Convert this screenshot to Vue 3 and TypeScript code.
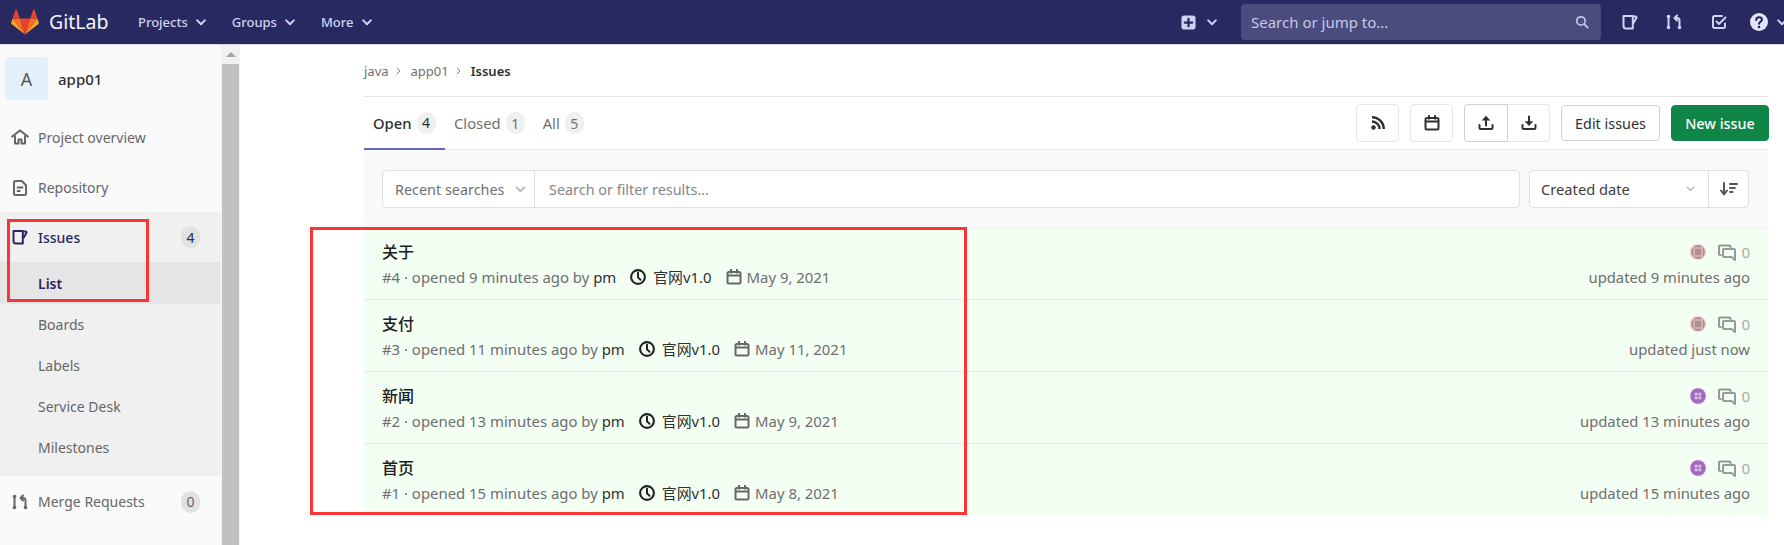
<script setup lang="ts">
interface Issue { title: string; num: number; opened: string; date: string; updated: string; av: string }
const issues: Issue[] = [
  { title: '关于', num: 4, opened: '9 minutes ago', date: 'May 9, 2021', updated: 'updated 9 minutes ago', av: 'brown' },
  { title: '支付', num: 3, opened: '11 minutes ago', date: 'May 11, 2021', updated: 'updated just now', av: 'brown' },
  { title: '新闻', num: 2, opened: '13 minutes ago', date: 'May 9, 2021', updated: 'updated 13 minutes ago', av: 'purple' },
  { title: '首页', num: 1, opened: '15 minutes ago', date: 'May 8, 2021', updated: 'updated 15 minutes ago', av: 'purple' },
]
const subItems = ['Boards', 'Labels', 'Service Desk', 'Milestones']
const navLinks = ['Projects', 'Groups', 'More']
</script>

<template>
  <div class="page">
    <header class="topbar">
      <div class="brand">
        <svg class="logo" viewBox="0 0 28 26" width="28" height="26">
          <path d="M14 25.5 19.2 9.6H8.8z" fill="#e24329" />
          <path d="M14 25.5 8.8 9.6H1.5z" fill="#fc6d26" />
          <path d="M1.5 9.6.1 14c-.1.4 0 .8.4 1.1L14 25.5z" fill="#fca326" />
          <path d="M1.5 9.6h7.3L5.6.4c-.2-.5-.8-.5-1 0z" fill="#e24329" />
          <path d="M14 25.5 19.2 9.6h7.3z" fill="#fc6d26" />
          <path d="M26.5 9.6 27.9 14c.1.4 0 .8-.4 1.1L14 25.5z" fill="#fca326" />
          <path d="M26.5 9.6h-7.3L22.4.4c.2-.5.8-.5 1 0z" fill="#e24329" />
        </svg>
        <span class="brand-name">GitLab</span>
      </div>
      <nav class="top-nav">
        <span v-for="l in navLinks" :key="l" class="top-link">
          {{ l }}
          <svg class="chev" viewBox="0 0 10 7" width="10" height="7"><path d="M1.2 1.4 5 5.2l3.8-3.8" fill="none" stroke="currentColor" stroke-width="2" stroke-linecap="round" stroke-linejoin="round" /></svg>
        </span>
      </nav>
      <div class="top-right">
        <svg class="plus" viewBox="0 0 16 16" width="15" height="15"><rect x="0.5" y="0.5" width="15" height="15" rx="3" fill="#d1d1f0" /><path d="M8 4v8M4 8h8" stroke="#292961" stroke-width="2.4" stroke-linecap="round" /></svg>
        <svg class="chev plus-chev" viewBox="0 0 10 7" width="10" height="7"><path d="M1.2 1.4 5 5.2l3.8-3.8" fill="none" stroke="currentColor" stroke-width="2" stroke-linecap="round" stroke-linejoin="round" /></svg>
        <div class="top-search">
          <span>Search or jump to...</span>
          <svg viewBox="0 0 16 16" width="14" height="14"><circle cx="6.8" cy="6.8" r="4.8" fill="none" stroke="#c4c4e4" stroke-width="2" /><path d="m10.5 10.5 4 4" stroke="#c4c4e4" stroke-width="2.2" stroke-linecap="round" /></svg>
        </div>
        <svg class="t-issues" viewBox="0 0 16 16" width="16" height="16"><path d="M1.5 2h9.3v12.5H4A2.5 2.5 0 0 1 1.5 12zM10.8 2.5h2.7c.9 0 1.3.8.9 1.5l-3.6 6" fill="none" stroke="#d1d1f0" stroke-width="2" stroke-linejoin="round" stroke-linecap="round" /></svg>
        <svg class="t-mr" viewBox="0 0 16 16" width="16" height="16"><g fill="none" stroke="#d1d1f0" stroke-width="2" stroke-linecap="round" stroke-linejoin="round"><path d="M2.5 3.5v9M13.5 12.500V6.500c0-1.400-.8-2.500-2.300-2.500H9M11 1.500 8.500 4 11 6.500" /></g><circle cx="2.5" cy="2.5" r="1.8" fill="#d1d1f0" /><circle cx="2.5" cy="13.5" r="1.8" fill="#d1d1f0" /><circle cx="13.5" cy="13.5" r="1.8" fill="#d1d1f0" /></svg>
        <svg class="t-todo" viewBox="0 0 16 16" width="16" height="16"><path d="M14 9.5v3c0 .8-.7 1.500-1.500 1.500h-9C2.700 14 2 13.300 2 12.500v-9C2 2.700 2.700 2 3.500 2H11M5.500 7.500 8 10l6.500-6.500" fill="none" stroke="#d1d1f0" stroke-width="2" stroke-linecap="round" stroke-linejoin="round" /></svg>
        <svg class="t-help" viewBox="0 0 18 18" width="18" height="18"><circle cx="9" cy="9" r="9" fill="#e4e4f6" /><path d="M6.2 7c0-1.700 1.200-2.700 2.900-2.700s2.800 1 2.800 2.400c0 2.200-2.900 2-2.900 4" fill="none" stroke="#292961" stroke-width="2.100" stroke-linecap="round" /><circle cx="9" cy="14" r="1.300" fill="#292961" /></svg>
        <svg class="chev help-chev" viewBox="0 0 10 7" width="10" height="7"><path d="M1.2 1.4 5 5.2l3.8-3.8" fill="none" stroke="currentColor" stroke-width="2" stroke-linecap="round" stroke-linejoin="round" /></svg>
      </div>
    </header>

    <div class="body">
      <aside class="sidebar">
        <div class="side-inner">
          <div class="proj">
            <div class="proj-avatar">A</div>
            <span class="proj-name">app01</span>
          </div>
          <div class="side-item first">
            <svg viewBox="0 0 18 16" width="18" height="16"><path d="M1.200 7.500 9 1.500l7.800 6" fill="none" stroke="#666" stroke-width="2.200" stroke-linejoin="round" stroke-linecap="round" /><path d="M4 6.500v8h3.500v-4h3v4H14v-8" fill="none" stroke="#666" stroke-width="2" stroke-linejoin="round" /></svg>
            <span>Project overview</span>
          </div>
          <div class="side-item">
            <svg class="repo" viewBox="0 0 14 16" width="14" height="16"><path d="M2.500 1h6.300L13 5.200v8.300a1.500 1.500 0 0 1-1.500 1.500h-9A1.500 1.500 0 0 1 1 13.500v-11A1.500 1.500 0 0 1 2.500 1z" fill="none" stroke="#666" stroke-width="2" stroke-linejoin="round" /><path d="M3.800 7.500h6.400M3.800 11h3.600" stroke="#666" stroke-width="2" /></svg>
            <span>Repository</span>
          </div>
          <div class="side-group">
            <div class="side-item active">
              <svg viewBox="0 0 16 16" width="16" height="16"><path d="M1.500 2h9.300v12.500H4A2.500 2.500 0 0 1 1.500 12zM10.800 2.500h2.700c.9 0 1.300.8.900 1.500l-3.600 6" fill="none" stroke="#292961" stroke-width="2" stroke-linejoin="round" stroke-linecap="round" /></svg>
              <span>Issues</span>
              <em class="count">4</em>
            </div>
            <div class="sub-item current">List</div>
            <div v-for="s in subItems" :key="s" class="sub-item">{{ s }}</div>
          </div>
          <div class="side-item mr">
            <svg viewBox="0 0 16 16" width="16" height="16"><g fill="none" stroke="#666" stroke-width="2" stroke-linecap="round" stroke-linejoin="round"><path d="M2.500 3.500v9M13.500 12.500V6.500c0-1.400-.8-2.500-2.300-2.500H9M11 1.500 8.500 4 11 6.500" /></g><circle cx="2.500" cy="2.500" r="1.800" fill="#666" /><circle cx="2.500" cy="13.500" r="1.800" fill="#666" /><circle cx="13.500" cy="13.500" r="1.800" fill="#666" /></svg>
            <span>Merge Requests</span>
            <em class="count">0</em>
          </div>
        </div>
        <div class="scrollbar">
          <div class="arrow"></div>
          <div class="thumb"></div>
        </div>
      </aside>

      <main class="main">
        <div class="crumbs">
          <span>java</span>
          <svg viewBox="0 0 6 10" width="5" height="8"><path d="m1 1.200 3.800 3.800L1 8.800" fill="none" stroke="#777" stroke-width="1.200" /></svg>
          <span>app01</span>
          <svg viewBox="0 0 6 10" width="5" height="8"><path d="m1 1.200 3.800 3.800L1 8.800" fill="none" stroke="#777" stroke-width="1.200" /></svg>
          <strong>Issues</strong>
        </div>

        <div class="tabs">
          <div class="tab-list">
            <div class="tab on">Open <b class="badge">4</b></div>
            <div class="tab">Closed <b class="badge">1</b></div>
            <div class="tab">All <b class="badge">5</b></div>
          </div>
          <div class="actions">
            <button class="btn icon">
              <svg viewBox="0 0 16 16" width="16" height="16"><circle cx="3.500" cy="12.500" r="2.200" fill="#303030" /><path d="M2 6.500a7.500 7.500 0 0 1 7.500 7.500M2 2.200A11.800 11.800 0 0 1 13.800 14" fill="none" stroke="#303030" stroke-width="2.400" /></svg>
            </button>
            <button class="btn icon">
              <svg viewBox="0 0 16 16" width="16" height="16"><rect x="1.500" y="3" width="13" height="11.500" rx="1.500" fill="none" stroke="#303030" stroke-width="2" /><path d="M2 6.500h12" stroke="#303030" stroke-width="2" /><path d="M5 .8v3M11 .8v3" stroke="#303030" stroke-width="2" stroke-linecap="round" /></svg>
            </button>
            <div class="btn-group">
              <button class="btn icon first-g">
                <svg viewBox="0 0 16 16" width="16" height="16"><path d="M1.500 10v2.500c0 .8.700 1.500 1.500 1.500h10c.8 0 1.500-.7 1.500-1.500V10M8 10.500V4" fill="none" stroke="#303030" stroke-width="2" stroke-linecap="round" stroke-linejoin="round" /><path d="M8 .8 12.300 5.500H3.700z" fill="#303030" /></svg>
              </button>
              <button class="btn icon last-g">
                <svg viewBox="0 0 16 16" width="16" height="16"><path d="M1.500 10v2.500c0 .8.700 1.500 1.500 1.500h10c.8 0 1.500-.7 1.500-1.500V10M8 1.500V7" fill="none" stroke="#303030" stroke-width="2" stroke-linecap="round" stroke-linejoin="round" /><path d="M8 11 12.300 6.300H3.700z" fill="#303030" /></svg>
              </button>
            </div>
            <button class="btn text">Edit issues</button>
            <button class="btn new">New issue</button>
          </div>
        </div>

        <div class="filter">
          <div class="search-box">
            <div class="recent">
              Recent searches
              <svg viewBox="0 0 10 7" width="11" height="7"><path d="M1.200 1.400 5 5.200l3.800-3.800" fill="none" stroke="#bbb" stroke-width="2" stroke-linecap="round" stroke-linejoin="round" /></svg>
            </div>
            <div class="placeholder">Search or filter results...</div>
          </div>
          <div class="sort">
            <div class="sort-label">
              Created date
              <svg viewBox="0 0 10 7" width="9" height="6"><path d="M1.200 1.400 5 5.200l3.800-3.800" fill="none" stroke="#bbb" stroke-width="1.800" stroke-linecap="round" stroke-linejoin="round" /></svg>
            </div>
            <div class="sort-dir">
              <svg viewBox="0 0 18 16" width="18" height="16"><path d="M4 2v10.500M1 9.500l3 4 3-4" fill="none" stroke="#555" stroke-width="2" stroke-linecap="round" stroke-linejoin="round" /><path d="M10 3h7M10 7h5M10 11h2.500" stroke="#555" stroke-width="1.800" stroke-linecap="round" /></svg>
            </div>
          </div>
        </div>

        <ul class="issue-list">
          <li v-for="i in issues" :key="i.num" class="issue">
            <div class="issue-left">
              <div class="issue-title">{{ i.title }}</div>
              <div class="issue-meta">
                <span>#{{ i.num }} · opened {{ i.opened }} by <span class="dark">pm</span></span>
                <span class="meta-item milestone dark">
                  <svg viewBox="0 0 16 16" width="16" height="16"><circle cx="8" cy="8" r="6.900" fill="none" stroke="#222" stroke-width="2.100" /><path d="M8 3.800v4.600l2.500 2.300" fill="none" stroke="#222" stroke-width="2" stroke-linecap="round" /></svg>
                  官网v1.0
                </span>
                <span class="meta-item">
                  <svg viewBox="0 0 16 16" width="16" height="16"><rect x="1.500" y="3" width="13" height="11.500" rx="1.500" fill="none" stroke="#666" stroke-width="2" /><path d="M2 6.500h12" stroke="#666" stroke-width="2" /><path d="M5 .8v3M11 .8v3" stroke="#666" stroke-width="2" stroke-linecap="round" /></svg>
                  {{ i.date }}
                </span>
              </div>
            </div>
            <div class="issue-right">
              <div class="issue-stats">
                <svg class="avatar" viewBox="0 0 18 18" width="18" height="18">
                  <template v-if="i.av === 'brown'">
                    <circle cx="9" cy="9" r="8.500" fill="#eadede" />
                    <circle cx="9" cy="9" r="7" fill="#8a4f50" />
                    <path d="M5 2v14M7 1v16M9 1v16M11 1v16M13 2v14M2 5h14M1 7h16M1 9h16M1 11h16M2 13h14" stroke="#f1e7e7" stroke-width="0.800" fill="none" />
                    <rect x="6" y="6" width="6" height="6" fill="#7d4042" opacity="0.300" />
                  </template>
                  <template v-else>
                    <circle cx="9" cy="9" r="8.700" fill="#ece4f0" />
                    <circle cx="9" cy="9" r="7.700" fill="#a468bf" />
                    <path d="M7 5.500v7M11 5.500v7M5.500 7h7M5.500 11h7" stroke="#d9bce6" stroke-width="1.500" />
                  </template>
                </svg>
                <svg class="comment" viewBox="0 0 18 18" width="18" height="18"><path d="M12.500 4V2.500a1 1 0 0 0-1-1H2a1 1 0 0 0-1 1V10a1 1 0 0 0 1 1h1.500" fill="none" stroke="#949a94" stroke-width="2" /><path d="M6 5h10a1 1 0 0 1 1 1v10l-3.500-3H6a1 1 0 0 1-1-1V6a1 1 0 0 1 1-1z" fill="none" stroke="#949a94" stroke-width="2" stroke-linejoin="round" /></svg>
                <span class="zero">0</span>
              </div>
              <div class="updated">{{ i.updated }}</div>
            </div>
          </li>
        </ul>
      </main>
    </div>

    <div class="red-box red-side"></div>
    <div class="red-box red-list"></div>
  </div>
</template>

<style>
html, body { margin: 0; background: #fff; overflow: hidden; }
</style>

<style scoped>
* { box-sizing: border-box; }
.page {
  position: relative;
  width: 1784px;
  height: 545px;
  overflow: hidden;
  font-family: "Noto Sans", "Noto Sans CJK SC", sans-serif;
  font-size: 14px;
  color: #303030;
}
.topbar {
  height: 45px;
  background: #292961;
  border-bottom: 1px solid #d8d8e4;
  display: flex;
  align-items: center;
  padding-left: 11px;
  color: #d1d1f0;
}
.brand { display: flex; align-items: center; gap: 10px; }
.logo { display: block; }
.brand-name { font-size: 19.5px; color: #f4f4f8; line-height: 1; width: 59px; }
.top-nav { display: flex; margin-left: 30px; gap: 26px; }
.top-link { display: flex; align-items: center; gap: 8px; font-size: 13px; font-weight: 500; color: #d1d1f0; }
.chev { display: block; color: #d1d1f0; }
.top-right { margin-left: auto; display: flex; align-items: center; }
.plus { margin-right: 11px; }
.plus-chev { margin-right: 24px; }
.top-search {
  width: 360px;
  height: 36px;
  background: #4b4b7d;
  border-radius: 4px;
  display: flex;
  align-items: center;
  justify-content: space-between;
  padding: 0 12px 0 10px;
  color: #c8c8e6;
  font-size: 15px;
  margin-right: 21px;
}
.t-issues { margin-right: 28px; }
.t-mr { margin-right: 29px; }
.t-todo { margin-right: 23px; }
.help-chev { margin-left: 9px; margin-right: -3px; }

.body { display: flex; height: 500px; }
.sidebar { width: 240px; flex: none; display: flex; background: #fafafa; }
.side-inner { width: 221px; flex: none; display: flex; flex-direction: column; }
.proj { display: flex; align-items: center; padding: 12px 0 0 5px; gap: 10px; }
.proj-avatar {
  width: 43px;
  height: 43px;
  border-radius: 4px;
  background: #e3f1fc;
  color: #555;
  font-size: 18px;
  display: flex;
  align-items: center;
  justify-content: center;
}
.proj-name { font-size: 15px; font-weight: 500; color: #303030; }
.side-item {
  height: 49px;
  display: flex;
  align-items: center;
  padding: 0 21px 0 11px;
  color: #666;
  flex: none;
}
.side-item svg { flex: none; width: 18px; margin-right: 9px; }
.side-item.first { margin-top: 12px; height: 51px; padding-bottom: 1px; }
.side-group { background: #f0f0f0; padding-bottom: 8px; }
.side-item.active { color: #292961; font-weight: 500; height: 50px; }
.side-item.mr { margin-top: 1px; }
.count {
  margin-left: auto;
  font-style: normal;
  font-weight: 400;
  min-width: 19px;
  height: 22px;
  border-radius: 10px;
  background: #e2e2e2;
  color: inherit;
  font-size: 14px;
  display: flex;
  align-items: center;
  justify-content: center;
}
.sub-item { height: 41px; padding-left: 38px; display: flex; align-items: center; color: #666; }
.sub-item.current { height: 42px; background: #e5e5e5; color: #292961; font-weight: 600; margin-right: 1px; }
.scrollbar { flex: 1; background: #f1f1f1; padding: 0 1px; }
.arrow {
  width: 0; height: 0; margin: 7px auto 7px;
  border-left: 5px solid transparent; border-right: 5px solid transparent; border-bottom: 5px solid #a3a3a3;
}
.thumb { height: 500px; background: #c1c1c1; }

.main { width: 1404px; margin-left: 124px; flex: none; }
.crumbs {
  height: 52px;
  border-bottom: 1px solid #e5e5e5;
  display: flex;
  align-items: center;
  font-size: 13px;
  color: #707070;
}
.crumbs strong { font-weight: 600; color: #303030; }
.crumbs svg { margin: 0 10px -1px 7px; }
.tabs {
  height: 53px;
  display: flex;
  justify-content: space-between;
  border-bottom: 1px solid #e5e5e5;
}
.tab-list { display: flex; }
.tab {
  padding: 0 9px 1px;
  height: 53px;
  display: flex;
  align-items: center;
  gap: 5px;
  color: #707070;
  font-size: 14.8px;
}
.tab:first-child { width: 81px; }
.tab.on { color: #303030; font-weight: 500; border-bottom: 2px solid #6666c4; padding-bottom: 0; }
.badge {
  font-weight: 400;
  min-width: 19px;
  height: 22px;
  border-radius: 11px;
  background: #f0f0f0;
  font-size: 14px;
  display: flex;
  align-items: center;
  justify-content: center;
}
.actions { display: flex; align-items: center; gap: 11px; margin-right: -1px; }
.btn {
  font-family: inherit;
  font-size: 14.4px;
  height: 36px;
  border-radius: 4px;
  border: 1px solid #dfdfdf;
  background: #fff;
  color: #303030;
  display: flex;
  align-items: center;
  justify-content: center;
  padding: 0;
}
.btn.icon { width: 43px; height: 38px; border-color: #e6e6e6; }
.btn-group { display: flex; }
.btn.first-g { border-radius: 4px 0 0 4px; width: 44px; border-color: #cfcfcf; }
.btn.last-g { border-radius: 0 4px 4px 0; border-left: none; width: 42px; }
.btn.text { width: 99px; border-color: #d0d0d0; }
.btn.new { width: 98px; background: #108548; border-color: #108548; color: #fff; font-weight: 500; }

.filter {
  height: 78px;
  background: #fafafa;
  border-bottom: 1px solid #f0f0f0;
  padding: 20px 19px 0 18px;
  display: flex;
  gap: 9px;
}
.search-box, .sort {
  height: 38px;
  background: #fff;
  border: 1px solid #e0e0e0;
  border-radius: 4px;
  display: flex;
  align-items: center;
  color: #707070;
  font-size: 14.4px;
}
.search-box { width: 1138px; }
.recent {
  width: 152px;
  height: 100%;
  border-right: 1px solid #e0e0e0;
  display: flex;
  align-items: center;
  justify-content: space-between;
  padding: 0 8px 0 12px;
  flex: none;
}
.placeholder { padding-left: 14px; color: #868686; }
.sort { width: 220px; font-size: 14.7px; }
.sort-label {
  width: 179px;
  height: 100%;
  border-right: 1px solid #e0e0e0;
  display: flex;
  align-items: center;
  justify-content: space-between;
  padding: 0 13px 0 11px;
  color: #404040;
}
.sort-dir { flex: 1; display: flex; align-items: center; justify-content: center; }

.issue-list { list-style: none; margin: 0; padding: 0; }
.issue {
  height: 72px;
  background: #f4fff4;
  border-bottom: 1px solid #e3ebe3;
  display: flex;
  justify-content: space-between;
  padding: 0 18px;
}
.issue:last-child { border-bottom: none; height: 71px; }
.issue-title { font-size: 16px; font-weight: 500; color: #202020; line-height: 20px; margin-top: 14px; }
.issue-meta { display: flex; align-items: center; gap: 14px; margin-top: 5px; color: #6e6e6e; line-height: 20px; font-size: 14.9px; }
.dark { color: #303030; }
.meta-item { display: flex; align-items: center; gap: 5px; }
.milestone { gap: 7px; }
.issue-right { display: flex; flex-direction: column; align-items: flex-end; }
.issue-stats { display: flex; align-items: center; margin-top: 14px; height: 20px; }
.avatar { margin-right: 11px; }
.comment { margin-right: 5px; margin-top: 1px; }
.zero { font-size: 15px; color: #a8aca8; }
.updated { margin-top: 5px; line-height: 20px; color: #6e6e6e; font-size: 14.8px; }

.red-box { position: absolute; border: 3px solid #fb3535; }
.red-side { left: 7px; top: 219px; width: 142px; height: 83px; }
.red-list { left: 310px; top: 227px; width: 657px; height: 288px; }
</style>
